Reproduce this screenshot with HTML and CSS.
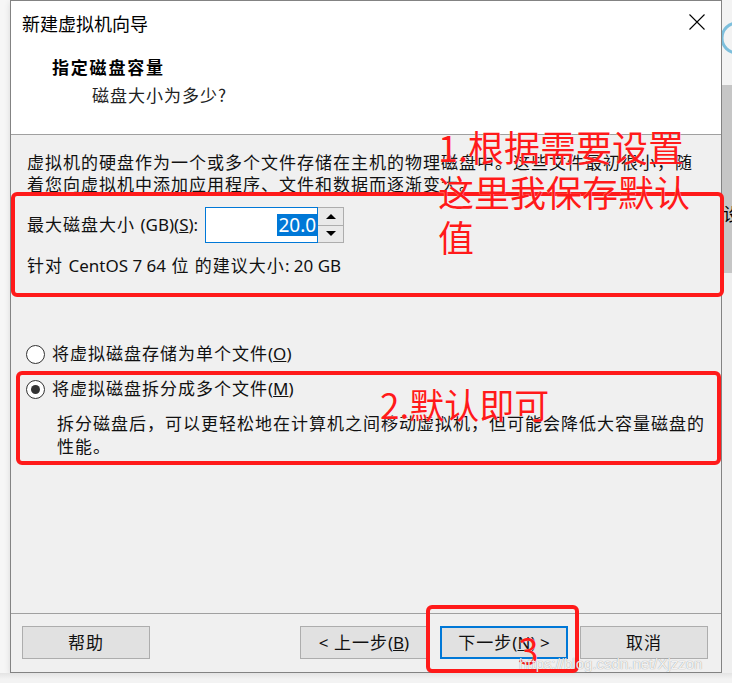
FILE: index.html
```html
<!DOCTYPE html>
<html lang="zh-CN">
<head>
<meta charset="utf-8">
<title>新建虚拟机向导</title>
<link rel="stylesheet" href="styles.css">
</head>
<body>
<div class="screen">
  <div class="gutter-left"></div>
  <div class="dialog">
    <header class="head">
      <div class="titlebar">
        <span class="title">新建虚拟机向导</span>
        <svg class="close" width="16" height="16" viewBox="0 0 16 16"><path d="M0.5 0.5 L15.5 15.5 M15.5 0.5 L0.5 15.5" stroke="#000" stroke-width="1.1" fill="none"/></svg>
      </div>
      <h1 class="heading">指定磁盘容量</h1>
      <p class="subheading">磁盘大小为多少?</p>
    </header>
    <main class="content">
      <p class="intro">虚拟机的硬盘作为一个或多个文件存储在主机的物理磁盘中。这些文件最初很小，随<br>着您向虚拟机中添加应用程序、文件和数据而逐渐变大。</p>
      <div class="size-row">
        <span class="label">最大磁盘大小 <span class="lat">(GB)(<u>S</u>):</span></span>
        <div class="spin">
          <div class="spin-input"><span class="sel">20.0</span></div>
          <div class="spin-btns">
            <span class="spin-btn"><span class="arrow up"></span></span>
            <span class="spin-btn"><span class="arrow down"></span></span>
          </div>
        </div>
      </div>
      <p class="recommend">针对 <span class="lat">CentOS 7 64</span> 位 的建议大小<span class="lat">: 20 GB</span></p>
      <div class="radio-row first"><span class="radio"></span><span>将虚拟磁盘存储为单个文件<span class="lat">(<u>O</u>)</span></span></div>
      <div class="radio-row second"><span class="radio checked"></span><span>将虚拟磁盘拆分成多个文件<span class="lat">(<u>M</u>)</span></span></div>
      <p class="desc">拆分磁盘后，可以更轻松地在计算机之间移动虚拟机，但可能会降低大容量磁盘的<br>性能。</p>
    </main>
    <footer class="foot">
      <button class="btn">帮助</button>
      <div class="nav">
        <button class="btn"><span class="lat">&lt;</span> 上一步<span class="lat">(<u>B</u>)</span></button>
        <button class="btn default">下一步<span class="lat">(<u>N</u>) &gt;</span></button>
        <button class="btn">取消</button>
      </div>
    </footer>
  </div>
  <div class="gutter-right">
    <div class="gr-top"><svg width="10" height="85" viewBox="0 0 10 85"><circle cx="15" cy="38" r="15" stroke="#7dbfdc" stroke-width="3" fill="none"/></svg></div>
    <div class="gr-mid"><span class="peek">设</span></div>
    <div class="gr-low"></div>
  </div>
  <div class="gutter-bottom"></div>
</div>

<div class="mark mark-1"></div>
<div class="mark mark-2"></div>
<div class="mark mark-3"></div>
<div class="note note-1">1.根据需要设置<br>这里我保存默认<br>值</div>
<div class="note note-2">2.默认即可</div>
<div class="note note-3">3</div>
<div class="watermark">https://blog.csdn.net/Xjzzon</div>
</body>
</html>
```

FILE: styles.css
```css
* { box-sizing: border-box; }

html, body {
  margin: 0;
  padding: 0;
}

body {
  width: 732px;
  height: 683px;
  overflow: hidden;
  background: #f4f4f4;
  font-family: "Noto Sans", "Noto Sans CJK SC", sans-serif;
  color: #111;
}

.screen {
  display: grid;
  grid-template-columns: 10px 712px 10px;
  grid-template-rows: 673px 10px;
}

.gutter-left { background: #f6f6f6; }

.gutter-bottom {
  grid-column: 1 / 4;
  background: linear-gradient(#e4e4e4, #f3f3f3 6px);
}

.gutter-right {
  display: flex;
  flex-direction: column;
  overflow: hidden;
}

.gr-top { height: 85px; background: #f3f3f3; }
.gr-top svg { display: block; }

.gr-mid {
  height: 188px;
  background: #c6c6c6;
  padding-top: 116px;
  overflow: hidden;
}

.peek {
  display: block;
  margin-left: 1px;
  font-family: "Noto Sans CJK SC", sans-serif;
  font-size: 18px;
  line-height: 24px;
  color: #000;
}

.gr-low { flex: 1; background: #efefef; }

/* dialog */
.dialog {
  display: flex;
  flex-direction: column;
  border: 1px solid #838383;
  background: #f0f0f0;
  box-shadow: 0 2px 6px rgba(0, 0, 0, 0.12);
}

.head {
  height: 134px;
  background: #fff;
  border-bottom: 1px solid #a0a0a0;
  padding-top: 11px;
}

.titlebar {
  display: flex;
  align-items: center;
  justify-content: space-between;
  height: 22px;
  padding: 0 16px 0 11px;
}

.title {
  font-family: "Noto Sans CJK SC", sans-serif;
  font-size: 18px;
  line-height: 22px;
  color: #000;
}

.close { display: block; margin-top: -2px; }

.heading {
  margin: 22px 0 0 41px;
  font-family: "Noto Sans CJK SC", sans-serif;
  font-size: 17px;
  font-weight: 700;
  letter-spacing: 1.8px;
  line-height: 22px;
  color: #000;
}

.subheading {
  margin: 6px 0 0 81px;
  font-family: "Noto Sans CJK SC", sans-serif;
  font-size: 17px;
  letter-spacing: 1px;
  line-height: 22px;
  color: #222;
}

.content {
  height: 478px;
  padding: 17px 0 0 16px;
  font-size: 17px;
  letter-spacing: 1px;
  line-height: 22px;
}

.content p { margin: 0; }

.lat { letter-spacing: 0; }

.intro { white-space: nowrap; }

.size-row {
  display: flex;
  align-items: center;
  gap: 7px;
  height: 36px;
  margin-top: 11px;
}

.label { white-space: nowrap; }

.spin { display: flex; height: 36px; }

.spin-input {
  width: 113px;
  height: 36px;
  background: #fff;
  border: 1px solid #0078d7;
  display: flex;
  align-items: center;
  justify-content: flex-end;
}

.sel {
  background: #0078d7;
  color: #fff;
  font-size: 19px;
  line-height: 22px;
  letter-spacing: 0;
  padding: 0 1px;
}

.spin-btns {
  display: flex;
  flex-direction: column;
  width: 26px;
  border: 1px solid #adadad;
  border-left: none;
  background: #e9e9e9;
}

.spin-btn {
  flex: 1;
  display: flex;
  align-items: center;
  justify-content: center;
}

.spin-btn + .spin-btn { border-top: 1px solid #adadad; }

.arrow {
  width: 0;
  height: 0;
  border-left: 5px solid transparent;
  border-right: 5px solid transparent;
}

.arrow.up { border-bottom: 5px solid #000; }
.arrow.down { border-top: 5px solid #000; }

.content .recommend { margin-top: 12px; white-space: nowrap; }

.radio-row {
  display: flex;
  align-items: center;
  gap: 7px;
  height: 22px;
  margin-left: -1px;
  white-space: nowrap;
}

.radio-row.first { margin-top: 66px; }
.radio-row.second { margin-top: 13px; }

.radio {
  width: 19px;
  height: 19px;
  border-radius: 50%;
  border: 1px solid #333;
  background: #fff;
  display: flex;
  align-items: center;
  justify-content: center;
  flex: none;
}

.radio.checked::after {
  content: "";
  width: 9px;
  height: 9px;
  border-radius: 50%;
  background: #333;
}

.content .desc {
  margin: 12px 0 0 30px;
  line-height: 23px;
  white-space: nowrap;
}

/* footer */
.foot {
  flex: 1;
  border-top: 1px solid #a0a0a0;
  display: flex;
  align-items: flex-start;
  justify-content: space-between;
  padding: 12px 13px 0 11px;
}

.nav { display: flex; gap: 12px; }

.btn {
  width: 128px;
  height: 33px;
  margin: 0;
  padding: 0;
  border: 1px solid #adadad;
  background: #e1e1e1;
  font-family: "Noto Sans", "Noto Sans CJK SC", sans-serif;
  font-size: 17px;
  letter-spacing: 1px;
  color: #111;
  line-height: 22px;
}

.btn.default { border: 2px solid #0078d7; }

/* annotations over the screenshot */
.mark {
  position: absolute;
  border: 4px solid #ff1a1a;
  border-radius: 6px;
}

.mark-1 { left: 11px; top: 192px; width: 713px; height: 105px; }
.mark-2 { left: 16px; top: 371px; width: 705px; height: 94px; }
.mark-3 { left: 426px; top: 605px; width: 153px; height: 68px; }

.note {
  position: absolute;
  font-family: "Noto Sans CJK SC", sans-serif;
  font-size: 35px;
  line-height: 45px;
  color: #ff1a1a;
  white-space: nowrap;
  text-shadow: 0 0 1px #fff;
}

.note-1 { left: 438px; top: 124px; font-size: 36px; }
.note-2 { left: 380px; top: 381px; }
.note-3 { left: 518px; top: 627px; font-size: 37px; }

.watermark {
  position: absolute;
  left: 519px;
  top: 655px;
  font-family: "Liberation Sans", sans-serif;
  font-size: 15px;
  line-height: 17px;
  color: rgba(255, 255, 255, 0.9);
  text-shadow: 0 0 1px rgba(0, 0, 0, 0.45);
  white-space: nowrap;
}
```
